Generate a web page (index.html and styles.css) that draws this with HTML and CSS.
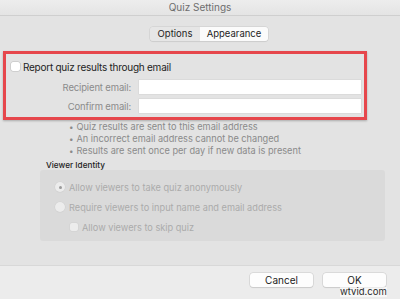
FILE: index.html
```html
<!DOCTYPE html>
<html>
<head>
<meta charset="utf-8">
<link rel="stylesheet" href="styles.css">
</head>
<body>
<div class="window">
  <div class="titlebar">Quiz Settings</div>
  <div class="content">
    <div class="tabs">
      <div class="tab">Options</div>
      <div class="tab active">Appearance</div>
    </div>
    <div class="report-box">
      <div class="check-row">
        <span class="checkbox"></span>
        <span class="check-label">Report quiz results through email</span>
      </div>
      <div class="field-row">
        <span class="field-label">Recipient email:</span>
        <span class="field-input"></span>
      </div>
      <div class="field-row">
        <span class="field-label">Confirm email:</span>
        <span class="field-input"></span>
      </div>
    </div>
    <ul class="notes">
      <li>Quiz results are sent to this email address</li>
      <li>An incorrect email address cannot be changed</li>
      <li>Results are sent once per day if new data is present</li>
    </ul>
    <div class="section-title">Viewer Identity</div>
    <div class="identity-box">
      <div class="option-row">
        <span class="radio selected"></span>
        <span>Allow viewers to take quiz anonymously</span>
      </div>
      <div class="option-row">
        <span class="radio"></span>
        <span>Require viewers to input name and email address</span>
      </div>
      <div class="option-row sub">
        <span class="small-check"></span>
        <span>Allow viewers to skip quiz</span>
      </div>
    </div>
  </div>
  <div class="footer">
    <div class="button">Cancel</div>
    <div class="button">OK</div>
  </div>
  <div class="watermark">wtvid.com</div>
</div>
</body>
</html>
```
FILE: styles.css
```css
* { box-sizing: border-box; }
html, body {
  margin: 0;
  padding: 0;
}
body {
  width: 400px;
  height: 299px;
  overflow: hidden;
  font-family: Inter, "Liberation Sans", sans-serif;
  background: #ececec;
}
.window {
  position: relative;
  width: 400px;
  height: 299px;
  display: flex;
  flex-direction: column;
}
.titlebar {
  height: 16px;
  line-height: 15px;
  text-align: center;
  font-size: 10px;
  color: #6e6e6e;
  background: linear-gradient(#ededed, #e4e4e4);
  border-bottom: 1px solid #cfcfcf;
}
.content {
  height: 249px;
  background: #e3e3e3;
  padding-top: 11px;
  display: flex;
  flex-direction: column;
}
.tabs {
  align-self: flex-start;
  margin-left: 150px;
  display: flex;
  height: 14px;
  border-radius: 3px;
  box-shadow: 0 0 0 0.5px #c9c9c9, 0 1px 1px rgba(0,0,0,0.08);
  overflow: hidden;
  font-size: 9.5px;
  line-height: 14px;
  color: #1e1e1e;
}
.tab {
  width: 50px;
  text-align: center;
  background: #e6e6e6;
}
.tab.active {
  width: 68px;
  background: #fbfbfb;
}
.report-box {
  margin-top: 10px;
  margin-left: 3px;
  width: 364px;
  height: 69px;
  border: 3px solid #e6474c;
  box-shadow: 0 1px 2px rgba(0,0,0,0.25);
  padding-top: 8px;
}
.check-row {
  display: flex;
  align-items: center;
  height: 9px;
  margin-left: 5px;
}
.checkbox {
  width: 9px;
  height: 9px;
  background: #fff;
  border-radius: 2px;
  box-shadow: 0 0 0 0.5px #bcbcbc;
}
.check-label {
  margin-left: 3px;
  font-size: 10px;
  letter-spacing: -0.25px;
  color: #222;
}
.field-row {
  display: flex;
  align-items: center;
  height: 14px;
  margin-top: 5px;
}
.check-row + .field-row { margin-top: 9px; }
.field-label {
  width: 125px;
  text-align: right;
  font-size: 9.5px;
  letter-spacing: -0.15px;
  color: #8b8b8b;
}
.field-input {
  margin-left: 8px;
  width: 222px;
  height: 14px;
  background: #fff;
  box-shadow: 0 0 0 0.5px #d4d4d4;
}
.notes {
  list-style: none;
  margin: 1px 0 0 69px;
  padding: 0;
  font-size: 9.2px;
  line-height: 11px;
  color: #8a8a8a;
}
.notes li::before {
  content: "\2022";
  margin-right: 3px;
  font-size: 8px;
}
.section-title {
  margin: 4px 0 0 46px;
  font-size: 8.2px;
  font-weight: 500;
  line-height: 9px;
  color: #1e1e1e;
}
.identity-box {
  margin: 0 0 0 40px;
  width: 345px;
  height: 71px;
  background: #dadada;
  border-radius: 3px;
  padding-top: 12px;
  color: #ababab;
  font-size: 9.2px;
}
.option-row {
  display: flex;
  align-items: center;
  height: 10px;
  margin-left: 15px;
  margin-bottom: 10px;
  gap: 4px;
}
.option-row.sub {
  margin-left: 30px;
  margin-bottom: 0;
}
.radio {
  width: 10px;
  height: 10px;
  border-radius: 50%;
  background: #ececec;
  box-shadow: 0 0 0 0.5px #cfcfcf;
  display: flex;
  align-items: center;
  justify-content: center;
}
.radio.selected::after {
  content: "";
  width: 3px;
  height: 3px;
  border-radius: 50%;
  background: #9a9a9a;
}
.small-check {
  width: 8px;
  height: 8px;
  border-radius: 2px;
  background: #ececec;
  box-shadow: 0 0 0 0.5px #cfcfcf;
}
.footer {
  flex: 1;
  background: #ececec;
  border-top: 1px solid #d8d8d8;
  display: flex;
  justify-content: flex-end;
  align-items: flex-start;
  padding: 7px 14px 0 0;
  gap: 10px;
}
.button {
  width: 63px;
  height: 14px;
  background: #fdfdfd;
  border-radius: 3px;
  box-shadow: 0 0 0 0.5px #c8c8c8, 0 1px 1px rgba(0,0,0,0.12);
  text-align: center;
  font-size: 10px;
  line-height: 14px;
  color: #222;
}
.watermark {
  position: absolute;
  left: 340px;
  top: 287px;
  font-size: 9.5px;
  line-height: 10px;
  color: #2a2a2a;
  background: rgba(255,255,255,0.6);
}
```
